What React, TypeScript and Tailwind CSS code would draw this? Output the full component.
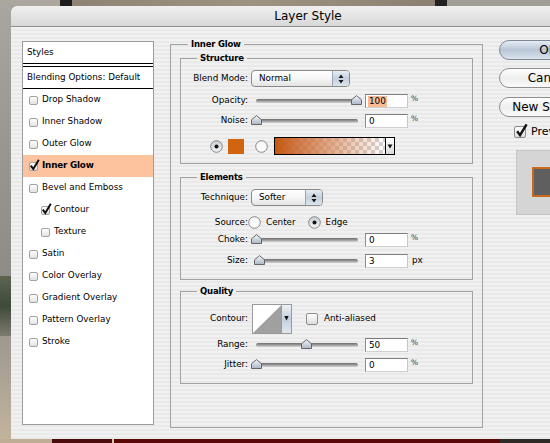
import React from "react";

type Item = { label: string; checked?: boolean; indent?: boolean; active?: boolean };

const items: Item[] = [
  { label: "Drop Shadow" },
  { label: "Inner Shadow" },
  { label: "Outer Glow" },
  { label: "Inner Glow", checked: true, active: true },
  { label: "Bevel and Emboss" },
  { label: "Contour", checked: true, indent: true },
  { label: "Texture", indent: true },
  { label: "Satin" },
  { label: "Color Overlay" },
  { label: "Gradient Overlay" },
  { label: "Pattern Overlay" },
  { label: "Stroke" },
];

function CheckBox({ checked, big }: { checked?: boolean; big?: boolean }) {
  return (
    <span
      className={
        big
          ? "relative w-[12px] h-[12px] shrink-0 rounded-[2px] border border-[#8c8c8c] bg-linear-to-b from-white to-[#dcdcdc]"
          : "relative w-[9px] h-[9px] shrink-0 rounded-[2px] border border-[#a2a2a2] bg-linear-to-b from-white to-[#e2e2e2]"
      }
    >
      {checked && (
        <svg
          className={big ? "absolute left-[0px] top-[-4px]" : "absolute left-[-1px] top-[-4px]"}
          width={big ? 13 : 11}
          height={big ? 15 : 12}
          viewBox="0 0 11 12"
        >
          <path d="M1.8 6.6 L4.3 10 L9.8 0.8" fill="none" stroke="#111" strokeWidth="2" />
        </svg>
      )}
    </span>
  );
}

function Radio({ on, id }: { on?: boolean; id: string }) {
  return (
    <svg width="13" height="13" viewBox="0 0 13 13" className="shrink-0">
      <defs>
        <linearGradient id={id} x1="0" y1="0" x2="0" y2="1">
          <stop offset="0" stopColor={on ? "#c9ced4" : "#f4f4f4"} />
          <stop offset="1" stopColor={on ? "#f3f5f7" : "#ffffff"} />
        </linearGradient>
      </defs>
      <circle cx="6.5" cy="6.5" r="5.8" fill={`url(#${id})`} stroke="#7b7b7b" strokeWidth="0.9" />
      {on && <circle cx="6.5" cy="6.5" r="2" fill="#111" />}
    </svg>
  );
}

function Popup({ label, wide }: { label: string; wide?: boolean }) {
  return (
    <div
      className={
        (wide ? "w-[99px] " : "w-[72px] ") +
        "flex h-[17px] rounded-[4px] border border-[#8a8a8a] bg-linear-to-b from-white via-[#f6f6f6] to-[#e3e3e3] overflow-hidden"
      }
    >
      <span className="flex-1 pl-[7px] leading-[15px]">{label}</span>
      <span className="w-[17px] border-l border-[#9aa6b4] bg-linear-to-b from-[#e6edf4] via-[#c4d0dd] to-[#dde5ee] flex items-center justify-center">
        <svg width="6" height="10" viewBox="0 0 6 10">
          <path d="M3 0.5 L5.5 4 L0.5 4 Z M3 9.5 L5.5 6 L0.5 6 Z" fill="#1a1a1a" />
        </svg>
      </span>
    </div>
  );
}

function Field({ value, selected }: { value: string; selected?: boolean }) {
  return (
    <div className="ml-[2px] w-[43px] h-[14px] shrink-0 bg-white border border-t-[#7e7e7e] border-l-[#8c8c8c] border-r-[#c6c6c6] border-b-[#d0d0d0] pl-[2px] flex items-center">
      <span className={selected ? "bg-[#f8b994] leading-[11px] px-[1px]" : "leading-[11px] px-[1px]"}>{value}</span>
    </div>
  );
}

function Slider({ pos }: { pos: number }) {
  return (
    <div className="relative ml-[3px] w-[112px] h-[14px] shrink-0 flex items-center">
      <div className="ml-[5px] w-[102px] h-[4px] rounded-full bg-linear-to-b from-[#6e6e6e] via-[#9c9c9c] to-[#d6d6d6]" />
      <svg className="absolute top-[1px]" style={{ left: 5 + pos - 5.5 }} width="11" height="10" viewBox="0 0 11 10">
        <defs>
          <linearGradient id="thumb" x1="0" y1="0" x2="0" y2="1">
            <stop offset="0" stopColor="#f3f6f9" />
            <stop offset="1" stopColor="#aab7c5" />
          </linearGradient>
        </defs>
        <path d="M0.5 9.5 L0.5 4.8 L5.5 0.6 L10.5 4.8 L10.5 9.5 Z" fill="url(#thumb)" stroke="#5a5a5a" strokeWidth="0.9" />
      </svg>
    </div>
  );
}

function SliderRow({
  label,
  pos,
  value,
  unit,
  selected,
  className,
}: {
  label: string;
  pos: number;
  value: string;
  unit: string;
  selected?: boolean;
  className: string;
}) {
  return (
    <div className={"flex items-center h-[14px] " + className}>
      <span className="w-[67px] text-right shrink-0">{label}</span>
      <Slider pos={pos} />
      <Field value={value} selected={selected} />
      <span className={unit === "px" ? "ml-[4px] text-[8.8px]" : "ml-[3px] text-[7.5px] text-[#333] self-start mt-[-1px]"}>
        {unit}
      </span>
    </div>
  );
}

function Button({ label, primary }: { label: string; primary?: boolean }) {
  return (
    <div
      className={
        primary
          ? "w-[98px] h-[20px] rounded-full border border-[#7d8896] bg-linear-to-b from-[#e6edf4] via-[#b7c6d6] to-[#dbe4ee] flex items-center justify-center text-[12px]"
          : "w-[98px] h-[20px] rounded-full border border-[#8e8e8e] bg-linear-to-b from-white via-[#eeeeee] to-[#fafafa] flex items-center justify-center text-[12px]"
      }
    >
      {label}
    </div>
  );
}

function StylesList() {
  return (
    <div className="mt-[3px] w-[132px] h-[384px] shrink-0 border border-[#9c9c9c] bg-white">
      <div className="h-[22px] border-b border-black pl-[4px] leading-[21px]">Styles</div>
      <div className="h-[2px]" />
      <div className="h-[23px] border-y border-black pl-[4px] leading-[21px]">Blending Options: Default</div>
      {items.map((it) => (
        <div
          key={it.label}
          className={
            (it.active ? "bg-[#fdc39f] font-bold " : "") +
            (it.indent ? "pl-[18px] " : "pl-[6px] ") +
            "h-[22px] flex items-center gap-[4px]"
          }
        >
          <CheckBox checked={it.checked} />
          <span className={it.active ? "tracking-[-0.2px]" : ""}>{it.label}</span>
        </div>
      ))}
    </div>
  );
}

function Legend({ children, inner }: { children: React.ReactNode; inner?: boolean }) {
  return (
    <legend
      className={
        (inner ? "ml-[16px] " : "ml-[8px] ") +
        "px-[3px] font-bold text-[8.5px] leading-[12px] tracking-[-0.2px]"
      }
    >
      {children}
    </legend>
  );
}

function ContourPicker() {
  return (
    <svg className="ml-[4px] shrink-0" width="40" height="30" viewBox="0 0 40 30">
      <defs>
        <linearGradient id="cseg" x1="0" y1="0" x2="0" y2="1">
          <stop offset="0" stopColor="#eef2f6" />
          <stop offset="0.5" stopColor="#c3cfdb" />
          <stop offset="1" stopColor="#e2e8ef" />
        </linearGradient>
      </defs>
      <rect x="0.5" y="0.5" width="39" height="29" fill="#fff" stroke="#9a9a9a" />
      <path d="M1 29 L29.5 1 L29.5 29 Z" fill="#a0a0a0" />
      <rect x="29.5" y="0.5" width="10" height="29" fill="url(#cseg)" stroke="#9a9a9a" />
      <path d="M32.3 12 L36.7 12 L34.5 16.5 Z" fill="#111" />
    </svg>
  );
}

function LayerStyleBody() {
  return (
    <div className="flex-1 flex pl-[11px] pt-[11px] bg-[repeating-linear-gradient(to_bottom,#f1f1f1_0px,#f1f1f1_2px,#e9e9e9_2px,#e9e9e9_4px)]">
      <StylesList />

      <fieldset className="ml-[16px] w-[313px] h-[390px] shrink-0 border border-[#a2a2a2] px-[9px] m-0">
        <Legend>Inner Glow</Legend>

        <fieldset className="mt-[2px] h-[112px] border border-[#a2a2a2] p-0 m-0">
          <Legend inner>Structure</Legend>
          <div className="mt-[6px] flex items-center h-[17px]">
            <span className="w-[67px] text-right shrink-0">Blend Mode:</span>
            <span className="ml-[3px]">
              <Popup label="Normal" wide />
            </span>
          </div>
          <SliderRow className="mt-[7px]" label="Opacity:" pos={100.5} value="100" unit="%" selected />
          <SliderRow className="mt-[6px]" label="Noise:" pos={0.5} value="0" unit="%" />
          <div className="mt-[9px] h-[18px] flex items-center pl-[29px]">
            <Radio on id="r1" />
            <span className="ml-[5px] w-[16px] h-[15px] bg-[#d0640f]" />
            <span className="ml-[11px]">
              <Radio id="r2" />
            </span>
            <div className="ml-[6px] w-[121px] h-[18px] border border-black flex">
              <div className="flex-1 bg-[conic-gradient(#d2d2d2_25%,#ffffff_0_50%,#d2d2d2_0_75%,#ffffff_0)] bg-[length:8px_8px]">
                <div className="h-full bg-linear-to-r from-[#c45810] via-[#d78454]/70 to-transparent" />
              </div>
              <div className="w-[9px] border-l border-black bg-linear-to-b from-white to-[#dadada] flex items-center justify-center">
                <svg width="6" height="5" viewBox="0 0 6 5">
                  <path d="M0.5 0.5 L5.5 0.5 L3 4.5 Z" fill="#111" />
                </svg>
              </div>
            </div>
          </div>
        </fieldset>

        <fieldset className="mt-[7px] h-[109px] border border-[#a2a2a2] p-0 m-0">
          <Legend inner>Elements</Legend>
          <div className="mt-[6px] flex items-center h-[17px]">
            <span className="w-[67px] text-right shrink-0">Technique:</span>
            <span className="ml-[3px]">
              <Popup label="Softer" />
            </span>
          </div>
          <div className="mt-[10px] flex items-center h-[13px]">
            <span className="w-[67px] text-right shrink-0">Source:</span>
            <Radio id="r3" />
            <span className="ml-[5px]">Center</span>
            <span className="ml-[12px]">
              <Radio on id="r4" />
            </span>
            <span className="ml-[5px]">Edge</span>
          </div>
          <SliderRow className="mt-[4px]" label="Choke:" pos={0.5} value="0" unit="%" />
          <SliderRow className="mt-[7px]" label="Size:" pos={3.5} value="3" unit="px" />
        </fieldset>

        <fieldset className="mt-[5px] h-[99px] border border-[#a2a2a2] p-0 m-0">
          <Legend inner>Quality</Legend>
          <div className="mt-[7px] flex items-center h-[30px]">
            <span className="w-[67px] text-right shrink-0">Contour:</span>
            <ContourPicker />
            <span className="ml-[14px] flex">
              <CheckBox big />
            </span>
            <span className="ml-[6px]">Anti-aliased</span>
          </div>
          <SliderRow className="mt-[4px]" label="Range:" pos={50} value="50" unit="%" />
          <SliderRow className="mt-[6px]" label="Jitter:" pos={0.5} value="0" unit="%" />
        </fieldset>
      </fieldset>

      <div className="ml-[16px] flex flex-col">
        <div className="mt-[2px]">
          <Button label="OK" primary />
        </div>
        <div className="mt-[8px]">
          <Button label="Cancel" />
        </div>
        <div className="mt-[9px]">
          <Button label="New Style..." />
        </div>
        <div className="mt-[7px] ml-[15px] flex items-center gap-[5px] text-[11px]">
          <CheckBox checked big />
          <span>Preview</span>
        </div>
        <div className="mt-[9px] ml-[17px] w-[64px] h-[65px] bg-[#d5d5d5] border border-[#c4c4c4] flex items-center justify-center">
          <div className="w-[32px] h-[30px] bg-[#5f5f5f] border-2 border-[#c9681e]" />
        </div>
      </div>
    </div>
  );
}

export default function App() {
  return (
    <div className="w-[550px] h-[443px] overflow-hidden flex flex-col bg-[#a29e98] font-['DejaVu_Sans',sans-serif] text-[8.8px] text-black">
      <div className="h-[6px] shrink-0 flex">
        <div className="w-[60px] bg-[#aba69e]" />
        <div className="w-[12px] bg-[#1d1d1d]" />
        <div className="w-[363px] bg-linear-to-r from-[#8e8374] via-[#a09282] to-[#8c8072]" />
        <div className="w-[12px] bg-[#222]" />
        <div className="flex-1 bg-[#a19d97]" />
      </div>
      <div className="h-[433px] shrink-0 flex">
        <div className="w-[11px] shrink-0 flex flex-col">
          <div className="h-[270px] bg-linear-to-b from-[#a9a6a2] via-[#9a9692] to-[#8f8b86]" />
          <div className="h-[60px] bg-linear-to-b from-[#5e6452] via-[#3f4a38] to-[#7d7b70]" />
          <div className="flex-1 bg-linear-to-b from-[#9e9890] to-[#c2b39c]" />
        </div>
        <div className="w-[594px] shrink-0 flex flex-col rounded-t-[6px] overflow-hidden">
          <div className="h-[21px] shrink-0 border-b border-[#8e8e8e] bg-linear-to-b from-[#f0f0f0] to-[#d8d8d8] flex items-center justify-center text-[12px]">
            Layer Style
          </div>
          <LayerStyleBody />
        </div>
      </div>
      <div className="flex-1 flex">
        <div className="w-[52px] bg-[#bfae95]" />
        <div className="w-[60px] bg-[#4a0c0c]" />
        <div className="w-[2px] bg-[#d8c9b0]" />
        <div className="w-[386px] bg-[#5a0808]" />
        <div className="flex-1 bg-[#2f2a26]" />
      </div>
    </div>
  );
}
